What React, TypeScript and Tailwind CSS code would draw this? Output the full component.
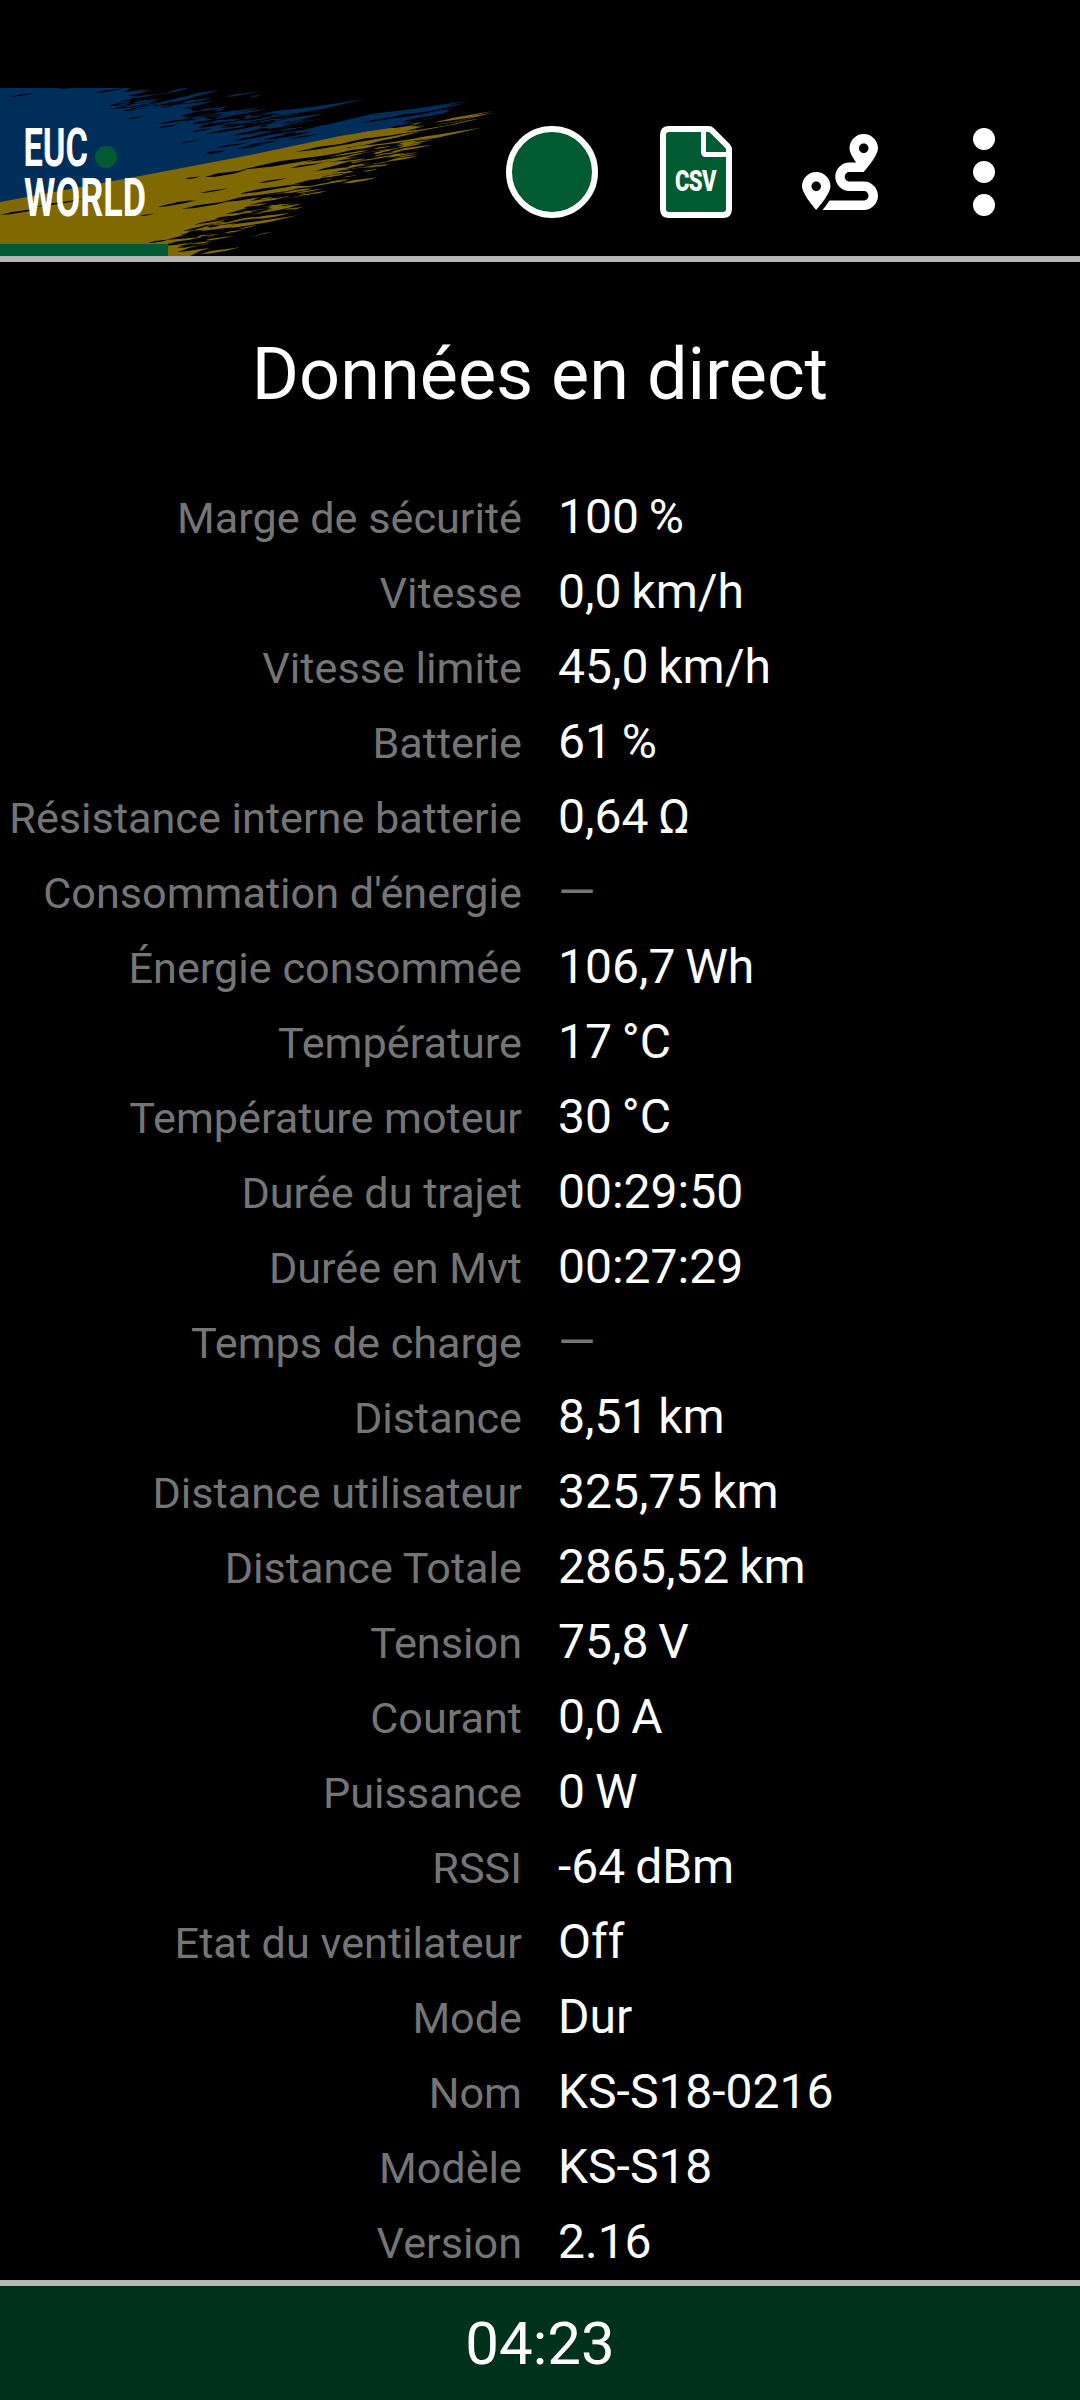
import { FaRoute } from 'react-icons/fa';

interface Reading {
  label: string;
  value: string | null;
}

// x, y, length, thickness
type Streak = [number, number, number, number];

const readings: Reading[] = [
  { label: 'Marge de sécurité', value: '100 %' },
  { label: 'Vitesse', value: '0,0 km/h' },
  { label: 'Vitesse limite', value: '45,0 km/h' },
  { label: 'Batterie', value: '61 %' },
  { label: 'Résistance interne batterie', value: '0,64 Ω' },
  { label: "Consommation d'énergie", value: null },
  { label: 'Énergie consommée', value: '106,7 Wh' },
  { label: 'Température', value: '17 °C' },
  { label: 'Température moteur', value: '30 °C' },
  { label: 'Durée du trajet', value: '00:29:50' },
  { label: 'Durée en Mvt', value: '00:27:29' },
  { label: 'Temps de charge', value: null },
  { label: 'Distance', value: '8,51 km' },
  { label: 'Distance utilisateur', value: '325,75 km' },
  { label: 'Distance Totale', value: '2865,52 km' },
  { label: 'Tension', value: '75,8 V' },
  { label: 'Courant', value: '0,0 A' },
  { label: 'Puissance', value: '0 W' },
  { label: 'RSSI', value: '-64 dBm' },
  { label: 'Etat du ventilateur', value: 'Off' },
  { label: 'Mode', value: 'Dur' },
  { label: 'Nom', value: 'KS-S18-0216' },
  { label: 'Modèle', value: 'KS-S18' },
  { label: 'Version', value: '2.16' },
];

const blueStreaks: Streak[] = [
  [235, 33, 130, 3], [245, 29, 45, 2], [180, 27, 60, 3], [150, 14, 70, 3], [140, 8, 50, 3],
  [250, 38, 75, 3], [250, 43, 70, 2.5], [255, 47, 50, 2], [330, 36, 137, 3], [340, 40, 110, 4],
  [135, 19, 60, 3], [165, 21, 50, 2], [225, 9, 35, 1], [250, 9, 12, 1],
];

const yellowStreaks: Streak[] = [
  [380, 44, 113, 3], [400, 44, 80, 2], [350, 62, 132, 2.5], [330, 59, 90, 3], [320, 67, 115, 3],
  [310, 75, 95, 3], [300, 82, 85, 3], [290, 90, 105, 2], [270, 92, 75, 3], [240, 104, 90, 3],
  [230, 112, 98, 3], [220, 120, 80, 3], [215, 128, 60, 2.5], [205, 143, 93, 2], [200, 147, 60, 2],
  [195, 157, 78, 2], [190, 151, 50, 2], [185, 160, 40, 2], [180, 165, 30, 2], [330, 52, 120, 2],
  [225, 135, 45, 2], [190, 145, 60, 2.5], [200, 166, 40, 1.5],
];

const gapStreaks: Streak[] = [
  // blue side
  [107, 18, 50, 2], [112, 21, 70, 2], [122, 23, 60, 2], [120, 14, 60, 3], [128, 8, 60, 5],
  [138, 14, 70, 4], [58, 1, 40, 1.5], [10, 9, 25, 0.8], [95, 5, 30, 1], [150, 20, 50, 3],
  [158, 36, 40, 1], [157, 40, 22, 1], [180, 33, 30, 1.5], [190, 44, 22, 1], [205, 46, 60, 1.2],
  [204, 66, 22, 1.6], [232, 53, 40, 1], [220, 40, 50, 1.2], [240, 46, 40, 1.5], [245, 58, 35, 1],
  [128, 31, 18, 0.8], [225, 35, 60, 1.6], [250, 49, 60, 1.5], [262, 52, 50, 1.5], [285, 40, 40, 2],
  [255, 44, 45, 1.2], [385, 31, 60, 1.5], [400, 34, 55, 1.5], [360, 35, 60, 0.8], [250, 37, 40, 1],
  [180, 55, 20, 0.7], [215, 60, 35, 1], [236, 61, 30, 0.8], [262, 33, 35, 1.5],
  // yellow side
  [0, 127, 40, 1.3], [35, 119, 50, 1], [205, 89, 42, 2.4], [240, 82, 130, 1.6], [185, 91, 15, 1],
  [157, 119, 40, 1], [170, 116, 25, 0.8], [182, 121, 50, 1.4], [222, 114, 65, 2], [200, 105, 28, 0.8],
  [238, 106, 75, 1.4], [258, 95, 30, 1], [140, 128, 14, 0.8], [194, 137, 60, 2], [182, 143, 80, 2.4],
  [165, 152, 90, 2.4], [148, 155, 22, 1.2], [160, 158, 60, 2.2], [190, 150, 60, 3], [205, 155, 60, 4],
  [212, 133, 60, 2], [225, 126, 70, 2], [240, 128, 60, 2.5], [192, 160, 60, 3], [176, 164, 40, 1.2],
  [245, 118, 70, 1.6], [262, 112, 80, 1.6], [280, 105, 60, 2], [290, 97, 70, 2], [325, 87, 55, 3],
  [305, 74, 60, 1.2], [330, 79, 60, 3], [345, 70, 70, 2.6], [355, 63, 70, 2.6], [365, 57, 75, 2.2],
  [295, 64, 80, 0.8], [340, 56, 80, 1], [395, 51, 60, 2.4], [405, 43, 65, 1.6], [290, 80, 35, 1],
  [318, 90, 35, 2.4], [335, 66, 50, 1.4], [415, 39, 60, 1.4], [270, 101, 30, 1],
];

// A long thin sliver that follows the sweep of the brush
const streakPath = ([x, y, length, thickness]: Streak) => {
  const rise = length * 0.17;
  return `M${x} ${y}L${x + length * 0.3} ${y - rise * 0.36 - thickness / 2}L${x + length * 0.62} ${y - rise * 0.6 - thickness * 0.45}L${x + length} ${y - rise}L${x + length * 0.68} ${y - rise * 0.62 + thickness / 2}L${x + length * 0.25} ${y - rise * 0.2 + thickness / 2}Z`;
};

const toPath = (streaks: Streak[]) => streaks.map(streakPath).join('');

// Fine bristle marks scattered around the line (x1, y1) - (x2, y2), same result on every render
const bristles = (
  seed: number,
  count: number,
  [x1, y1, x2, y2]: [number, number, number, number],
  spread: number,
) => {
  let state = seed;
  const next = () => {
    state = (state * 16807) % 2147483647;
    return state / 2147483647;
  };
  return Array.from({ length: count }, (): Streak => {
    const t = next();
    const offset = (next() + next() - 1) * spread;
    return [x1 + (x2 - x1) * t, y1 + (y2 - y1) * t + offset, 8 + next() * 32, 0.7 + next() * 1.1];
  });
};

const fineBlue = bristles(77, 45, [115, 14, 290, 38], 9);
const fineYellow = bristles(4242, 80, [185, 150, 400, 60], 15);
const fineGaps = [
  ...bristles(911, 62, [175, 158, 400, 60], 15),
  ...bristles(313, 34, [180, 32, 290, 42], 12),
  ...bristles(58, 14, [390, 38, 450, 28], 4),
];

const Logo = () => (
  <svg className="block h-[168px] w-[506px]" viewBox="0 0 506 168">
    <path
      fill="#002e5b"
      d="M0 0H130L124 4L150 1L134 8L152 9L128 15L160 11L107 18L150 17L122 23L165 19L195 21L190 25L212 25L199 29L215 32L240 31L270 26L285 24L262 32L298 26L265 37L300 32L280 38L262 46L285 44L330 36L400 24L467 15L430 23L450 22L428 34L250 69L0 115Z"
    />
    <path
      fill="#7f6900"
      d="M0 114L140 88L250 67L340 48L428 34L493 23L430 38L460 35L400 47L370 56L345 60L370 62L320 74L345 73L310 85L330 87L290 98L320 98L270 106L250 113L268 115L235 123L252 124L215 133L235 135L200 145L218 146L185 156L210 153L192 162L200 163L190 168H0Z"
    />
    <path fill="#002e5b" d={toPath(blueStreaks)} />
    <path fill="#7f6900" d={toPath(yellowStreaks)} />
    <path fill="#000" d={toPath(gapStreaks)} />
    <path fill="#000" d="M190 22L216 14L232 17L270 6V24L246 29L216 32L199 29L212 25Z" />
    <path fill="#002e5b" d={toPath(fineBlue)} />
    <path fill="#7f6900" d={toPath(fineYellow)} />
    <path fill="#000" d={toPath(fineGaps)} />
    <path fill="#005a32" d="M0 156H168V168H0Z" />
    <circle cx="106" cy="69" r="11" fill="#005a32" />
    <g fill="#fff" className="font-[Roboto] text-[54px] font-bold">
      <text x="23.5" y="78" textLength="64.5" lengthAdjust="spacingAndGlyphs">EUC</text>
      <text x="24" y="128" textLength="122" lengthAdjust="spacingAndGlyphs">WORLD</text>
    </g>
  </svg>
);

const CsvIcon = () => (
  <svg className="block h-[92px] w-[72px]" viewBox="0 0 72 92">
    <path
      d="M9 3H48.5Q50.500 3 52 4.500L67.500 20Q69 21.500 69 23.500V83Q69 89 63 89H9Q3 89 3 83V9Q3 3 9 3Z"
      fill="#005a32"
      stroke="#fff"
      strokeWidth="6"
    />
    <path d="M43.500 4V26Q43.500 28.500 46 28.500H69" fill="none" stroke="#fff" strokeWidth="5" />
    {/* narrow glyphs with a little air between them */}
    <g fill="#fff" className="font-[Roboto] text-[29px] font-black">
      <text
        x="15"
        y="65.500"
        textLength="55"
        lengthAdjust="spacing"
        transform="translate(3.500 0) scale(0.760 1)"
      >
        CSV
      </text>
    </g>
  </svg>
);

const Header = () => (
  <header className="flex h-[262px] shrink-0 items-center border-b-[6px] border-[#b4b4b4] pt-[88px]">
    <Logo />
    <div className="size-[92px] rounded-full border-[6px] border-white bg-[#005a32]" />
    <div className="ml-[62px]">
      <CsvIcon />
    </div>
    <FaRoute className="ml-[70px] size-[76px]" />
    <div className="ml-[95px] flex flex-col gap-[11px]">
      <span className="size-[22px] rounded-full bg-white" />
      <span className="size-[22px] rounded-full bg-white" />
      <span className="size-[22px] rounded-full bg-white" />
    </div>
  </header>
);

const ReadingRow = ({ label, value }: Reading) => (
  <div className="flex h-[75px] items-baseline gap-9 leading-[75px] whitespace-nowrap">
    <span className="w-[522px] text-right text-[43.2px] text-[#757575]">{label}</span>
    {value ? (
      <span className="text-[48px] [word-spacing:-2px]">{value}</span>
    ) : (
      <span className="text-[48px] text-[#757575]">—</span>
    )}
  </div>
);

const App = () => {
  return (
    <div className="flex h-[2400px] w-[1080px] flex-col overflow-hidden bg-black font-[Roboto,sans-serif] text-white">
      <Header />
      <main className="h-[2018px] shrink-0">
        <h1 className="pt-[63px] pb-[54px] text-center text-[72px] leading-[100px]">Données en direct</h1>
        {readings.map((reading) => (
          <ReadingRow key={reading.label} {...reading} />
        ))}
      </main>
      <footer className="flex h-[120px] shrink-0 items-center justify-center border-t-[6px] border-[#b4b9b5] bg-[#00321b] pt-0.5 text-[60px]">
        04:23
      </footer>
    </div>
  );
};

export default App;
